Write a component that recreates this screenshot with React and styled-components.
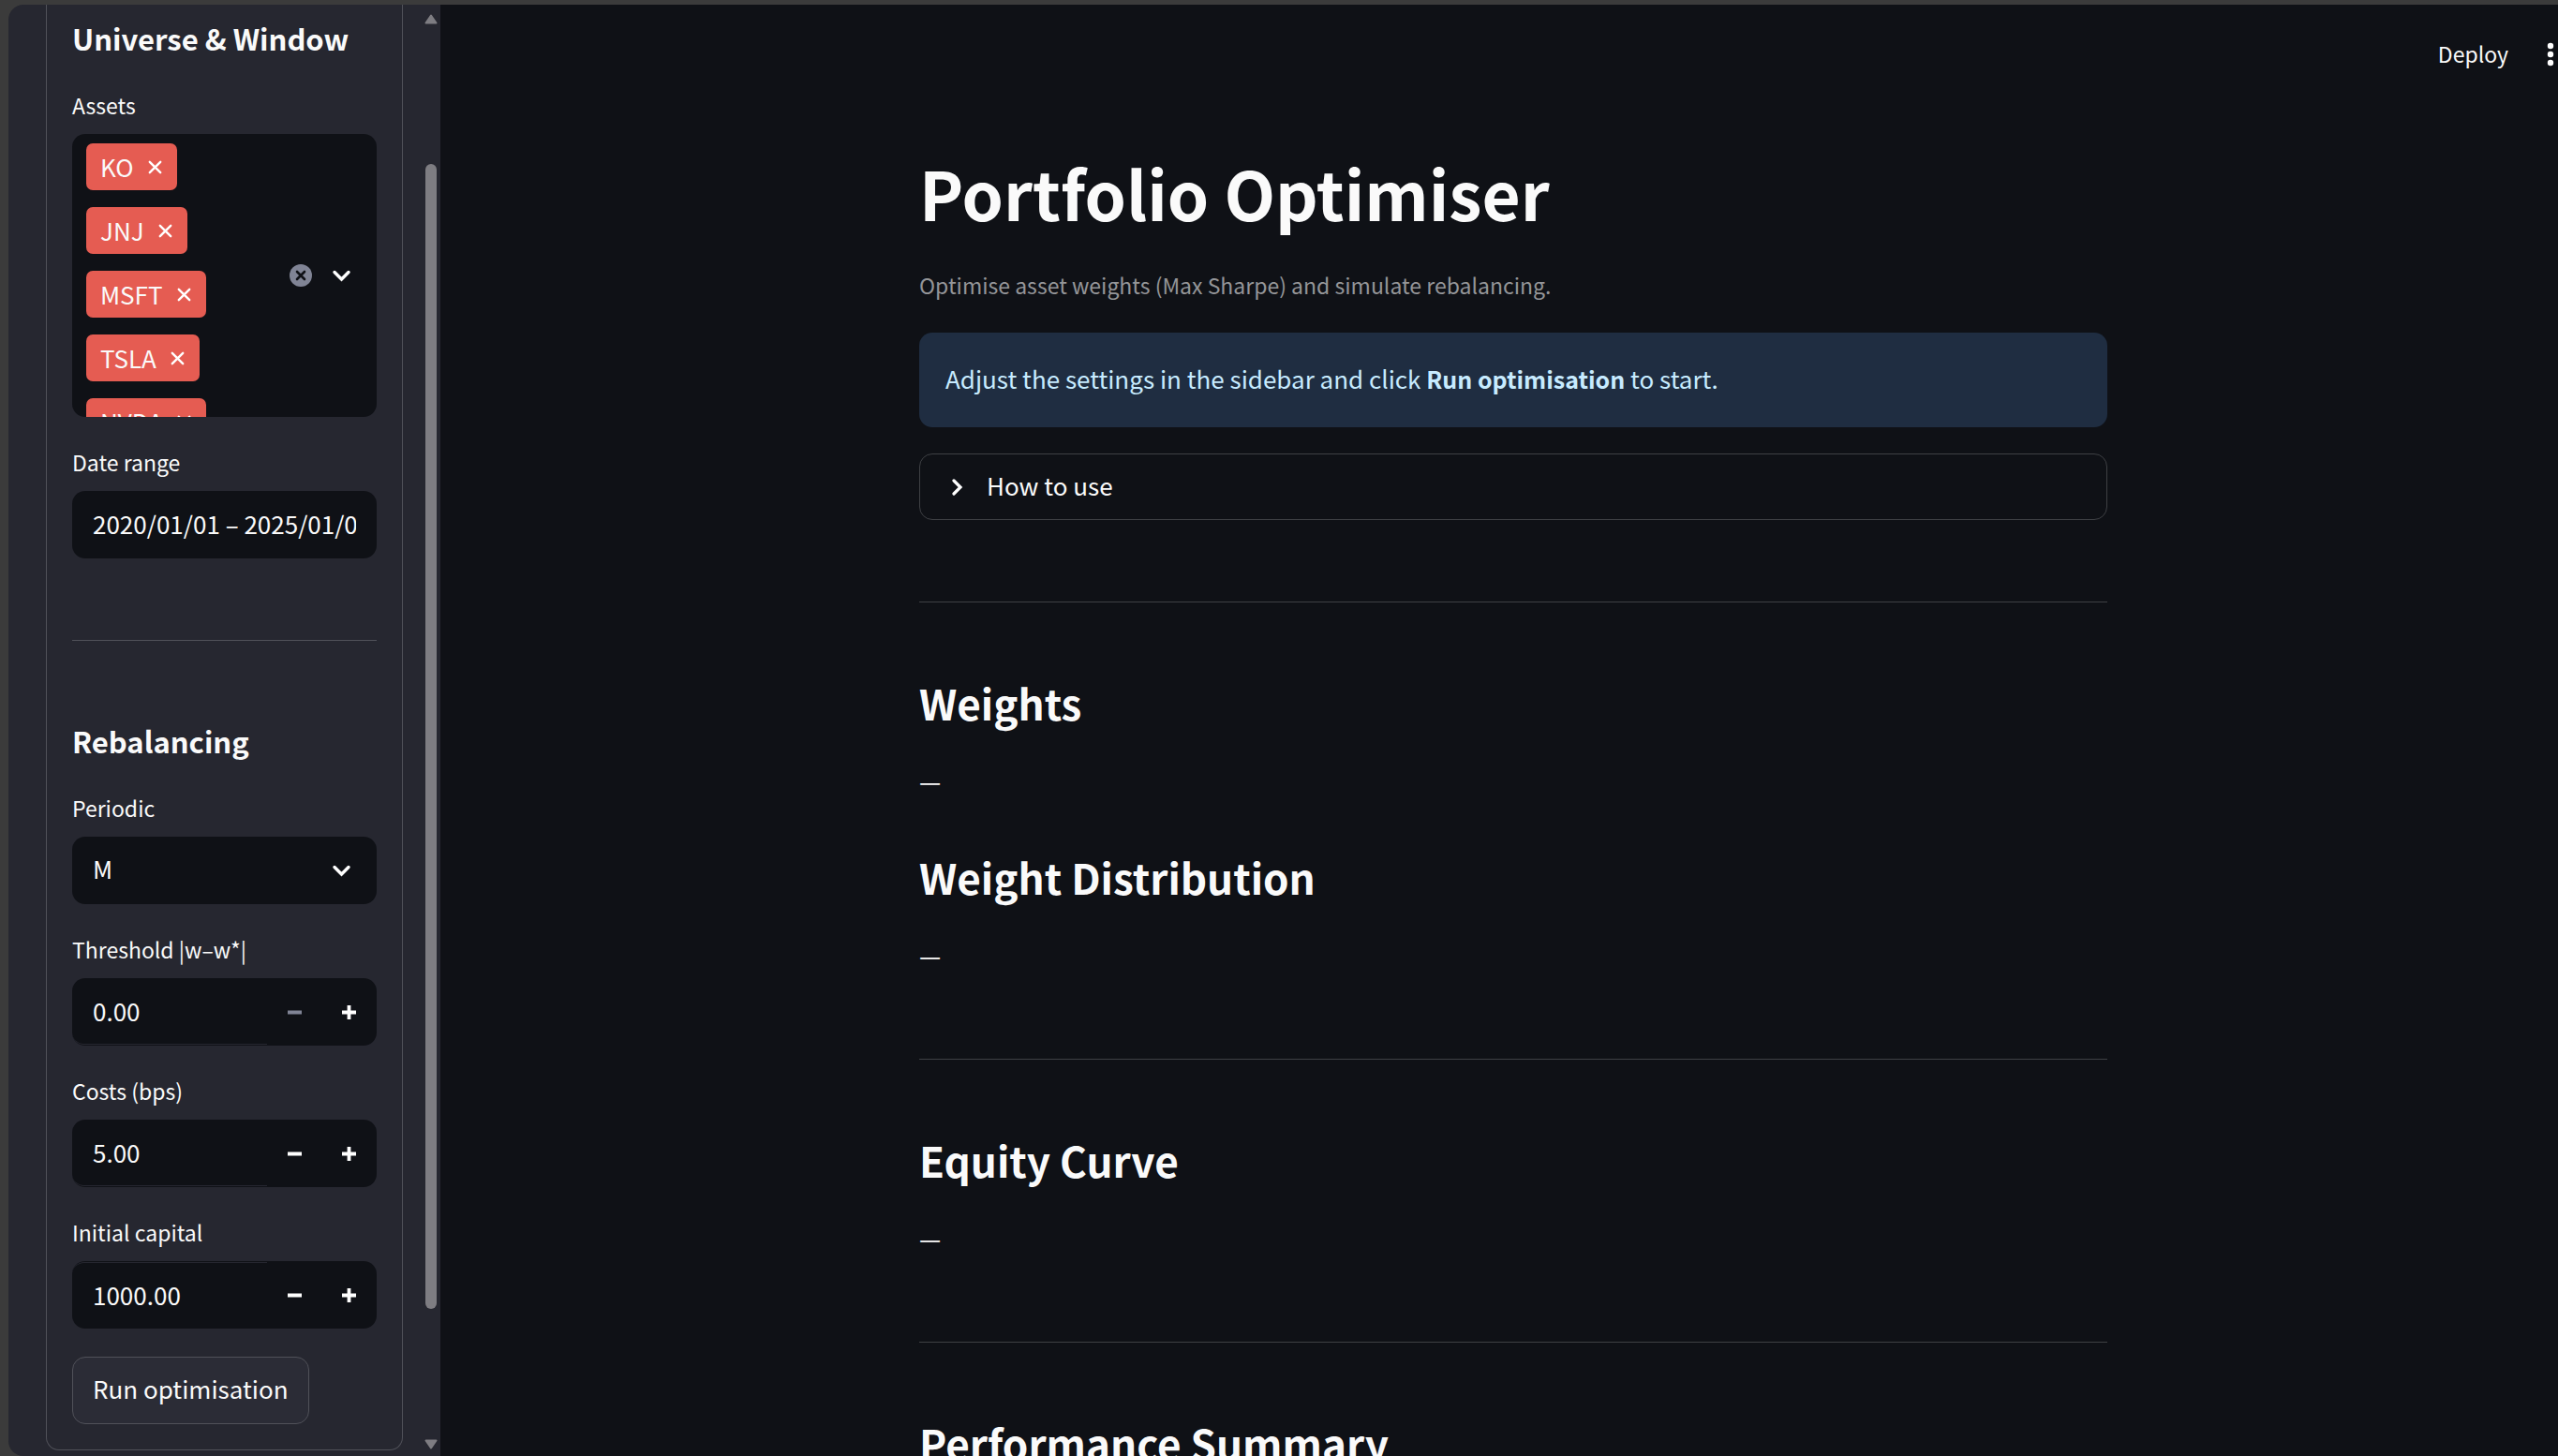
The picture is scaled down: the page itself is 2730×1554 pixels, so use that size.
import React, { useState } from "react";
import styled, { createGlobalStyle } from "styled-components";

const FONT = '"Noto Sans CJK SC", "Noto Sans", sans-serif';
const color = {
  frame: "#3b3b3b",
  page: "#0f1116",
  panel: "#262730",
  line: "#505159",
  mainLine: "#3e4044",
  text: "#fafafa",
  muted: "#949598",
  faded: "#808495",
  tag: "#e55c52",
  infoBg: "#1f2d41",
  infoText: "#c7ebff",
  scroll: "#7e7d82",
};

const GlobalStyle = createGlobalStyle`
  *, *::before, *::after { box-sizing: border-box; }
  body { margin: 0; background: ${color.frame}; color: ${color.text}; font: 400 26px/48px ${FONT}; }
  h1, h2, h3, p, ul { margin: 0; padding: 0; }
  button, input, select { font: inherit; color: inherit; margin: 0; }
  button { cursor: pointer; }
`;

const Shell = styled.div`
  display: flex;
  height: 100vh;
  padding: 5px 0 0 9px;
  overflow: hidden;
`;

/* Sidebar */
const Sidebar = styled.aside`
  display: flex;
  justify-content: space-between;
  flex: 0 0 461px;
  padding-left: 40px;
  border-radius: 16px 0 0 16px;
  background: ${color.panel};
  overflow: hidden;
`;

const Form = styled.form`
  align-self: flex-start;
  width: 381px;
  padding: 14px 27px 27px;
  border: 1px solid ${color.line};
  border-top: 0;
  border-radius: 0 0 14px 14px;
`;

const GroupTitle = styled.h3`
  margin-bottom: 31px;
  font-size: 31px;
  line-height: 44px;
  font-weight: 700;
  white-space: nowrap;
`;

const Fields = styled.div`
  display: flex;
  flex-direction: column;
  align-items: stretch;
  gap: 30px;
`;

const Field = styled.div`
  display: flex;
  flex-direction: column;
  gap: 13px;
`;

const Label = styled.label`
  font-size: 23px;
  line-height: 36px;
`;

const SideRule = styled.hr`
  height: 1px;
  margin: 87px 0 85px;
  border: 0;
  background: ${color.line};
`;

const MultiBox = styled.div`
  display: flex;
  align-items: center;
  height: 302px;
  padding: 0 25px 0 15px;
  border-radius: 14px;
  background: ${color.page};
  overflow: hidden;
`;

const TagList = styled.ul`
  display: flex;
  flex: 1;
  flex-direction: column;
  align-items: flex-start;
  align-self: stretch;
  gap: 18px;
  padding-top: 10px;
  list-style: none;
`;

const Tag = styled.li`
  display: flex;
  flex: none;
  align-items: center;
  gap: 15px;
  height: 50px;
  padding: 0 16px 0 15px;
  border-radius: 7px;
  background: ${color.tag};
`;

const IconButton = styled.button`
  display: flex;
  align-items: center;
  justify-content: center;
  width: ${(p) => p.$width}px;
  padding: 0;
  border: 0;
  background: none;
`;

const BoxActions = styled.div`
  display: flex;
  align-items: center;
  gap: 19px;
`;

const TextInput = styled.input`
  width: 100%;
  height: 72px;
  padding: 0 22px 4px;
  border: 0;
  border-radius: 14px;
  background: ${color.page};
  outline: none;
`;

const SelectBox = styled.div`
  display: grid;
  align-items: center;
  border-radius: 14px;
  background: ${color.page};

  > * { grid-area: 1 / 1; }
  > svg { justify-self: end; margin-right: 25px; pointer-events: none; }
`;

const Select = styled.select`
  width: 100%;
  height: 72px;
  padding: 0 60px 4px 22px;
  border: 0;
  background: none;
  appearance: none;
  outline: none;
`;

const NumberBox = styled.div`
  display: flex;
  height: 72px;
  padding: 1px 1px 1px 0;
  border-radius: 14px;
  background: ${color.page};
  overflow: hidden;
`;

const NumberInput = styled.input`
  flex: 1;
  min-width: 0;
  padding: 0 22px 2px;
  border: 0 solid ${color.panel};
  border-width: ${(p) => (p.$seam === "top" ? "1px 0 0" : "0 0 1px")};
  border-radius: 13px 0 0 13px;
  background: none;
  outline: none;
`;

const StepButton = styled.button`
  display: flex;
  align-items: center;
  justify-content: center;
  width: 58px;
  padding: 0;
  border: 0;
  background: none;
  color: ${(p) => (p.disabled ? color.faded : "#ffffff")};
`;

const RunButton = styled.button`
  align-self: flex-start;
  height: 72px;
  padding: 0 21px 4px;
  border: 1px solid ${color.line};
  border-radius: 14px;
  background: #2b2c36;
`;

const ScrollBar = styled.div`
  display: flex;
  flex-direction: column;
  align-items: center;
  width: 14px;
  margin-right: 3px;
  padding: 10px 0 7px;
`;

const Track = styled.div`
  display: flex;
  flex-direction: column;
  flex: 1;
  width: 12px;
  padding: 149px 0 139px;
`;

const Thumb = styled.div`
  flex: 1;
  border-radius: 6px;
  background: ${color.scroll};
`;

/* Main */
const Main = styled.main`
  flex: 1;
  min-width: 0;
  background: ${color.page};
  overflow: hidden;
`;

const Header = styled.header`
  display: flex;
  align-items: center;
  justify-content: flex-end;
  gap: 37px;
  height: 105px;
`;

const DeployButton = styled.button`
  padding: 0 0 2px;
  border: 0;
  background: none;
  font-size: 23px;
  line-height: 36px;
`;

const Content = styled.div`
  padding: 52px 0 0 30px;

  > section { width: 100%; max-width: 1268px; margin: 0 auto; }
`;

const Title = styled.h1`
  font-size: 71px;
  line-height: 86px;
  font-weight: 700;
`;

const Caption = styled.p`
  margin: 38px 0 33px;
  color: ${color.muted};
  font-size: 23px;
  line-height: 36px;
`;

const Info = styled.p`
  padding: 25px 28px 28px;
  border-radius: 14px;
  background: ${color.infoBg};
  color: ${color.infoText};

  strong { font-size: 25px; }
`;

const Expander = styled.details`
  margin-top: 28px;
  border: 1px solid ${color.mainLine};
  border-radius: 14px;
`;

const Summary = styled.summary`
  display: flex;
  align-items: center;
  gap: 23px;
  height: 69px;
  padding: 0 29px 3px;
  list-style: none;
  cursor: pointer;

  > svg { margin-top: 3px; }
`;

const Rule = styled.hr`
  height: 1px;
  margin: 87px 0 77px;
  border: 0;
  background: ${color.mainLine};
`;

const SectionTitle = styled.h2`
  margin-bottom: 29px;
  font-size: 44px;
  line-height: 60px;
  font-weight: 700;

  p + & { margin-top: 49px; }
`;

const ChevronDown = () => (
  <svg width="25" height="16" viewBox="0 0 25 16" fill="none" aria-hidden="true">
    <path d="M5 4.5 L12.5 12 L20 4.5" stroke="#fff" strokeWidth="3.4" strokeLinecap="round" />
  </svg>
);

const ChevronRight = () => (
  <svg width="19" height="26" viewBox="0 0 19 26" fill="none" aria-hidden="true">
    <path d="M7 6 L14 13 L7 20" stroke="#fff" strokeWidth="3.2" strokeLinecap="round" />
  </svg>
);

const Cross = () => (
  <svg width="15" height="15" viewBox="0 0 15 15" fill="none" aria-hidden="true">
    <path d="M1.8 1.8 L13.2 13.2 M13.2 1.8 L1.8 13.2" stroke="#fff" strokeWidth="2.4" strokeLinecap="round" />
  </svg>
);

const ClearIcon = () => (
  <svg width="24" height="24" viewBox="0 0 24 24" fill="none" aria-hidden="true">
    <circle cx="12" cy="12" r="12" fill={color.faded} />
    <path d="M8 8 L16 16 M16 8 L8 16" stroke={color.page} strokeWidth="2.6" strokeLinecap="round" />
  </svg>
);

const Minus = () => (
  <svg width="15" height="15" viewBox="0 0 15 15" aria-hidden="true">
    <path d="M0 5.6 H15 V9.4 H0 Z" fill="currentColor" />
  </svg>
);

const Plus = () => (
  <svg width="15" height="15" viewBox="0 0 15 15" aria-hidden="true">
    <path d="M5.6 0 H9.4 V5.6 H15 V9.4 H9.4 V15 H5.6 V9.4 H0 V5.6 H5.6 Z" fill="currentColor" />
  </svg>
);

const Kebab = () => (
  <svg width="8" height="26" viewBox="0 0 8 26" fill="#fff" aria-hidden="true">
    <circle cx="4" cy="4" r="3.2" />
    <circle cx="4" cy="13" r="3.2" />
    <circle cx="4" cy="22" r="3.2" />
  </svg>
);

const ScrollArrow = ({ down }) => (
  <svg width="14" height="11" viewBox="0 0 14 11" aria-hidden="true">
    <path
      d={down ? "M1.5 1.5 H12.5 L7 9.5 Z" : "M1.5 9.5 H12.5 L7 1.5 Z"}
      fill={color.scroll}
      stroke={color.scroll}
      strokeWidth="2"
      strokeLinejoin="round"
    />
  </svg>
);

function NumberField({ id, label, initial, step, seam }) {
  const [value, setValue] = useState(initial);
  const change = (by) => setValue(Math.max(0, Number(value) + by).toFixed(2));
  return (
    <Field>
      <Label htmlFor={id}>{label}</Label>
      <NumberBox>
        <NumberInput id={id} $seam={seam} inputMode="decimal" value={value} onChange={(e) => setValue(e.target.value)} />
        <StepButton type="button" aria-label={`Decrease ${label}`} disabled={Number(value) <= 0} onClick={() => change(-step)}>
          <Minus />
        </StepButton>
        <StepButton type="button" aria-label={`Increase ${label}`} onClick={() => change(step)}>
          <Plus />
        </StepButton>
      </NumberBox>
    </Field>
  );
}

function AssetPicker() {
  const [assets, setAssets] = useState(["KO", "JNJ", "MSFT", "TSLA", "NVDA"]);
  return (
    <Field>
      <Label as="span" id="assets-label">Assets</Label>
      <MultiBox role="group" aria-labelledby="assets-label">
        <TagList>
          {assets.map((name) => (
            <Tag key={name}>
              {name}
              <IconButton type="button" $width={15} aria-label={`Remove ${name}`} onClick={() => setAssets(assets.filter((a) => a !== name))}>
                <Cross />
              </IconButton>
            </Tag>
          ))}
        </TagList>
        <BoxActions>
          <IconButton type="button" $width={24} aria-label="Clear all" onClick={() => setAssets([])}>
            <ClearIcon />
          </IconButton>
          <IconButton type="button" $width={25} aria-label="Open asset list">
            <ChevronDown />
          </IconButton>
        </BoxActions>
      </MultiBox>
    </Field>
  );
}

export default function App() {
  return (
    <>
      <GlobalStyle />
      <Shell>
        <Sidebar>
          <Form onSubmit={(e) => e.preventDefault()}>
            <GroupTitle>Universe &amp; Window</GroupTitle>
            <Fields>
              <AssetPicker />
              <Field>
                <Label htmlFor="range">Date range</Label>
                <TextInput id="range" defaultValue="2020/01/01 – 2025/01/01" />
              </Field>
            </Fields>
            <SideRule />
            <GroupTitle>Rebalancing</GroupTitle>
            <Fields>
              <Field>
                <Label htmlFor="periodic">Periodic</Label>
                <SelectBox>
                  <Select id="periodic" defaultValue="M">
                    <option>M</option>
                  </Select>
                  <ChevronDown />
                </SelectBox>
              </Field>
              <NumberField id="threshold" label="Threshold |w–w*|" initial="0.00" step={0.01} seam="bottom" />
              <NumberField id="costs" label="Costs (bps)" initial="5.00" step={1} seam="bottom" />
              <NumberField id="capital" label="Initial capital" initial="1000.00" step={100} seam="top" />
              <RunButton type="submit">Run optimisation</RunButton>
            </Fields>
          </Form>
          <ScrollBar aria-hidden="true">
            <ScrollArrow />
            <Track>
              <Thumb />
            </Track>
            <ScrollArrow down />
          </ScrollBar>
        </Sidebar>
        <Main>
          <Header>
            <DeployButton type="button">Deploy</DeployButton>
            <IconButton type="button" $width={16} aria-label="Main menu">
              <Kebab />
            </IconButton>
          </Header>
          <Content>
            <section>
              <Title>Portfolio Optimiser</Title>
              <Caption>Optimise asset weights (Max Sharpe) and simulate rebalancing.</Caption>
              <Info>
                Adjust the settings in the sidebar and click <strong>Run optimisation</strong> to start.
              </Info>
              <Expander>
                <Summary>
                  <ChevronRight />
                  How to use
                </Summary>
              </Expander>
              <Rule />
              <SectionTitle>Weights</SectionTitle>
              <p>—</p>
              <SectionTitle>Weight Distribution</SectionTitle>
              <p>—</p>
              <Rule />
              <SectionTitle>Equity Curve</SectionTitle>
              <p>—</p>
              <Rule />
              <SectionTitle>Performance Summary</SectionTitle>
            </section>
          </Content>
        </Main>
      </Shell>
    </>
  );
}
